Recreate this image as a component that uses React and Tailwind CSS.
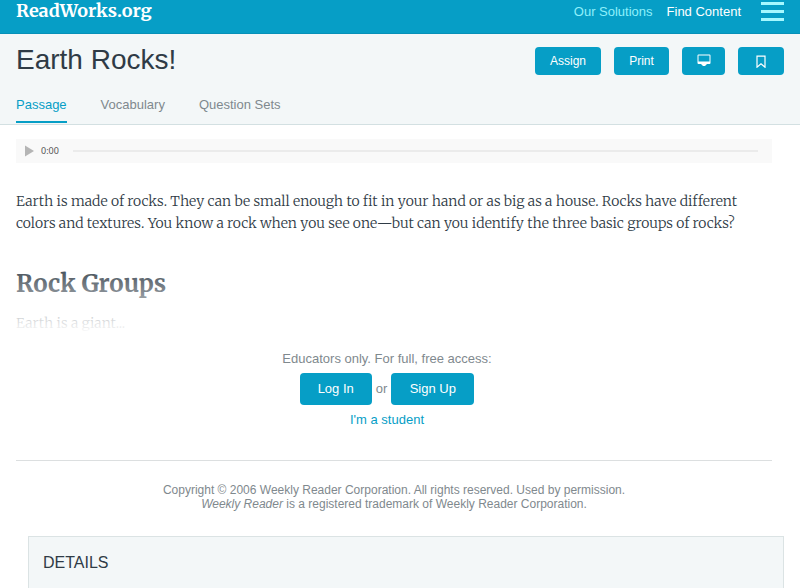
const tabs = [
  { name: "Passage", active: true },
  { name: "Vocabulary", active: false },
  { name: "Question Sets", active: false },
];

const Header = () => {
  return (
    <header className="flex h-[34px] items-start justify-between border-b border-[#0690b8] bg-[#069ec6] px-4 text-[13px] text-white">
      <a
        href="#"
        className="font-['Merriweather','Noto_Serif','DejaVu_Serif',serif] text-[18px] leading-[22px] font-bold"
      >
        ReadWorks.org
      </a>

      <nav className="flex items-start">
        <a href="#" className="mr-[14px] leading-6 text-[#8ff0fb]">
          Our Solutions
        </a>
        <a href="#" className="mr-5 leading-6">
          Find Content
        </a>
        <button aria-label="Menu" className="flex flex-col gap-[5px] pt-[2px]">
          <span className="h-[3px] w-[23px] bg-[#a5f8ff]" />
          <span className="h-[3px] w-[23px] bg-[#a5f8ff]" />
          <span className="h-[3px] w-[23px] bg-[#a5f8ff]" />
        </button>
      </nav>
    </header>
  );
};

const TitleBar = () => {
  const button =
    "flex h-7 items-center justify-center rounded bg-[#069ec6] text-xs text-white";

  return (
    <section className="border-b border-[#d3e0e2] bg-[#f3f7f8] px-4">
      <div className="flex h-[54px] items-center justify-between">
        <h1 className="pb-[2px] text-[28px] leading-8 text-[#2f3b46]">Earth Rocks!</h1>
        <div className="flex gap-[13px]">
          <button className={`${button} w-[66px]`}>Assign</button>
          <button className={`${button} w-[55px]`}>Print</button>
          <button className={`${button} w-[43px]`} aria-label="Present">
            <svg width="14" height="14" viewBox="0 0 14 14" fill="currentColor">
              <path
                fillRule="evenodd"
                d="M1.500 0.500h11a1 1 0 0 1 1 1V9a1 1 0 0 1-1 1H9.500v1H8.500v1h-3v-1H4.500v-1h-3a1 1 0 0 1-1-1V1.500a1 1 0 0 1 1-1zM1.500 1.500v6h11v-6z"
              />
            </svg>
          </button>
          <button className={`${button} w-[46px]`} aria-label="Bookmark">
            <svg
              width="12"
              height="14"
              viewBox="0 0 12 14"
              fill="none"
              stroke="currentColor"
              strokeWidth="1.2"
            >
              <path d="M2 2.200h8v11L6 9.800l-4 3.400z" />
            </svg>
          </button>
        </div>
      </div>

      <nav className="flex h-9 gap-[34px] pb-px text-[13px]">
        {tabs.map((tab) => (
          <a
            key={tab.name}
            href="#"
            className={`pt-[7px] leading-5 ${
              tab.active
                ? "border-b-2 border-[#069ec6] text-[#069ec6]"
                : "text-[#7f898e]"
            }`}
          >
            {tab.name}
          </a>
        ))}
      </nav>
    </section>
  );
};

const Player = () => {
  return (
    <div className="flex h-6 items-center bg-[#f9f9f9] pr-[14px] pl-2">
      <button aria-label="Play">
        <svg width="10" height="12" viewBox="0 0 10 12" fill="#b5b5b5">
          <path d="M1 0.500l9 5.500-9 5.500z" />
        </svg>
      </button>
      <span className="ml-[7px] w-8 font-['Noto_Sans',sans-serif] text-[9px] text-[#555]">
        0:00
      </span>
      <div className="h-[2px] flex-1 bg-[#ebebeb]" />
    </div>
  );
};

export default function App() {
  return (
    <div className="bg-white font-['Liberation_Sans',Arial,sans-serif]">
      <Header />
      <TitleBar />

      <main className="pt-[14px] pr-7 pl-4">
        <Player />

        {/* PASSAGE */}
        <article className="relative overflow-hidden pt-[27px] font-['Merriweather','Noto_Serif','DejaVu_Serif',serif] text-[#2f3b46]">
          <p className="text-sm leading-[22px] font-light">
            Earth is made of rocks. They can be small enough to fit in your hand
            or as big as a house. Rocks have different
            <br />
            colors and textures. You know a rock when you see one—but can you
            identify the three basic groups of rocks?
          </p>
          <h2 className="mt-[34px] text-2xl leading-8 font-bold">Rock Groups</h2>
          <p className="mt-3 text-sm leading-[22px] font-light">Earth is a giant...</p>
          <div className="absolute inset-x-0 bottom-0 h-[72px] bg-linear-to-b from-white/0 to-white" />
        </article>

        {/* ACCESS */}
        <section className="pt-[15px] pr-[14px] text-center text-[13px] text-[#7f898e]">
          <p className="leading-5">Educators only. For full, free access:</p>
          <div className="mt-1 flex items-center justify-center gap-1">
            <button className="h-8 w-18 rounded bg-[#069ec6] text-white">Log In</button>
            or
            <button className="h-8 w-[83px] rounded bg-[#069ec6] text-white">Sign Up</button>
          </div>
          <a href="#" className="mt-[5px] inline-block leading-5 text-[#069ec6]">
            I'm a student
          </a>
        </section>

        <footer className="mt-[30px] border-t border-[#dcdfe0] pt-[22px] pb-[25px] text-center text-xs leading-[14px] text-[#7f898e]">
          <p>
            Copyright © 2006 Weekly Reader Corporation. All rights reserved. Used
            by permission.
          </p>
          <p>
            <em>Weekly Reader</em> is a registered trademark of Weekly Reader
            Corporation.
          </p>
        </footer>
      </main>

      <section className="mr-4 ml-7 border border-b-0 border-[#dbe3e4] bg-[#f3f7f8] px-[14px] py-4">
        <h2 className="text-base leading-5 text-[#2f3b46]">DETAILS</h2>
      </section>
    </div>
  );
}
